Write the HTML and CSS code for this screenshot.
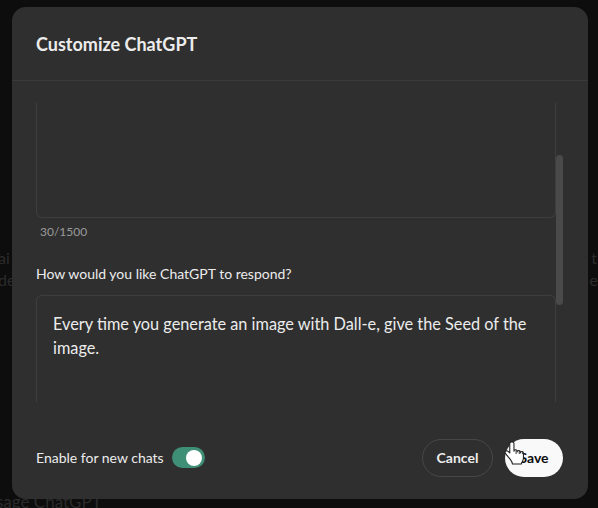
FILE: index.html
```html
<!DOCTYPE html>
<html lang="en">
<head>
    <meta charset="UTF-8">
    <meta name="viewport" content="width=device-width, initial-scale=1.0">
    <title>Customize ChatGPT</title>
    <link rel="stylesheet" href="styles.css">
</head>
<body>
    <div class="backdrop">
        <span class="bg-text bg-left-1">ai</span>
        <span class="bg-text bg-left-2">de</span>
        <span class="bg-text bg-right-1">t</span>
        <span class="bg-text bg-right-2">e</span>
        <span class="bg-text bg-bottom">sage ChatGPT</span>
    </div>

    <div class="modal">
        <div class="modal-header">
            <h1>Customize ChatGPT</h1>
        </div>

        <div class="modal-body">
            <div class="scroll-area">
                <div class="field-box field-box-top"></div>
                <div class="counter">30/1500</div>

                <label class="field-label" for="respond">How would you like ChatGPT to respond?</label>
                <div class="field-box field-box-cut" id="respond">
                    Every time you generate an image with Dall-e, give the Seed of the image.
                </div>
            </div>
            <div class="scrollbar"></div>
        </div>

        <div class="modal-footer">
            <div class="enable">
                <span>Enable for new chats</span>
                <span class="toggle"><span class="knob"></span></span>
            </div>
            <div class="actions">
                <button type="button" class="btn btn-cancel">Cancel</button>
                <button type="button" class="btn btn-save">Save</button>
            </div>
        </div>

        <!-- mouse pointer over the save button -->
        <svg class="cursor" width="21" height="26" viewBox="0 0 20 24">
            <path d="M7 1.5c-.8 0-1.5.7-1.5 1.5v9l-1.6-1.6c-.7-.7-1.8-.7-2.4 0-.6.6-.6 1.5 0 2.2l4.5 5.5c1 1.3 2 3 2 4.4h8.5c0-1.4 2-3 2-5.5v-5c0-.8-.7-1.4-1.5-1.4s-1.5.6-1.5 1.4v-1c0-.8-.7-1.4-1.5-1.4s-1.5.6-1.5 1.4v-.6c0-.8-.7-1.4-1.5-1.4s-1.5.6-1.5 1.4V3c0-.8-.7-1.5-1.5-1.5z"
                  fill="#fff" stroke="#1a1a1a" stroke-width="1" stroke-linejoin="round"/>
            <path d="M11.5 9.5v3.5M14.5 10v3M17.5 11v2" stroke="#1a1a1a" stroke-width=".8" fill="none"/>
        </svg>
    </div>
</body>
</html>
```

FILE: styles.css
```css
/* Customize dialog */
html, body {
    margin: 0;
    height: 100%;
}
body {
    font-family: Lato, "Noto Sans", sans-serif;
    background-color: #0d0d0d;
    color: #ececec;
    padding: 7px 10px 0 12px;
    box-sizing: border-box;
    position: relative;
    overflow: hidden;
}
.backdrop {
    position: absolute;
    inset: 0;
}
.bg-text {
    position: absolute;
    color: #2b2b2b;
    font-size: 16px;
}
.bg-left-1 { left: -2px; top: 248px; }
.bg-left-2 { left: -2px; top: 270px; }
.bg-right-1 { right: 1px; top: 248px; }
.bg-right-2 { right: 0; top: 270px; }
.bg-bottom { left: -4px; top: 491px; font-size: 17px; }

.modal {
    position: relative;
    width: 576px;
    height: 492px;
    background-color: #2f2f2f;
    border-radius: 14px;
    display: flex;
    flex-direction: column;
}
.modal-header {
    height: 73px;
    display: flex;
    align-items: center;
    padding: 0 24px;
    border-bottom: 1px solid #3a3a3a;
}
.modal-header h1 {
    margin: 0;
    font-size: 18px;
    font-weight: 700;
    color: #ececec;
}
.modal-body {
    position: relative;
    height: 321px;
    overflow: hidden;
}
.scroll-area {
    padding: 22px 32px 0 24px;
}
.field-box {
    border: 1px solid #3e3e3e;
    border-radius: 6px;
    box-sizing: border-box;
}
.field-box-top {
    height: 115px;
    border-top: none;
    border-top-left-radius: 0;
    border-top-right-radius: 0;
}
.counter {
    font-size: 12px;
    color: #9a9a9a;
    padding: 6px 4px 0;
    line-height: 16px;
}
.field-label {
    display: block;
    margin-top: 24px;
    font-size: 14px;
    line-height: 20px;
}
.field-box-cut {
    margin-top: 11px;
    height: 140px;
    padding: 16px 20px 0 16px;
    font-size: 16.3px;
    line-height: 24px;
    color: #ececec;
    border-bottom: none;
}
.scrollbar {
    position: absolute;
    right: 25px;
    top: 74px;
    width: 7px;
    height: 150px;
    border-radius: 4px;
    background-color: #4a4a4a;
}

.modal-footer {
    flex: 1;
    display: flex;
    align-items: center;
    justify-content: space-between;
    padding: 14px 25px 0 24px;
}
.enable {
    display: flex;
    align-items: center;
    gap: 8px;
    font-size: 14px;
}
.toggle {
    width: 33px;
    height: 21px;
    border-radius: 11px;
    background-color: #3f8f77;
    display: flex;
    align-items: center;
    justify-content: flex-end;
    padding: 0 3px;
    box-sizing: border-box;
}
.knob {
    width: 16px;
    height: 16px;
    border-radius: 50%;
    background-color: #fff;
}
.actions {
    display: flex;
    gap: 12px;
}
.btn {
    font-family: inherit;
    font-size: 14px;
    font-weight: 700;
    height: 38px;
    border-radius: 19px;
    cursor: pointer;
    padding: 0;
}
.btn-cancel {
    width: 71px;
    background: transparent;
    color: #ececec;
    border: 1px solid #474747;
}
.btn-save {
    width: 58px;
    background-color: #f9f9f9;
    color: #0d0d0d;
    border: none;
}
.cursor {
    position: absolute;
    left: 492px;
    top: 433px;
}
```
